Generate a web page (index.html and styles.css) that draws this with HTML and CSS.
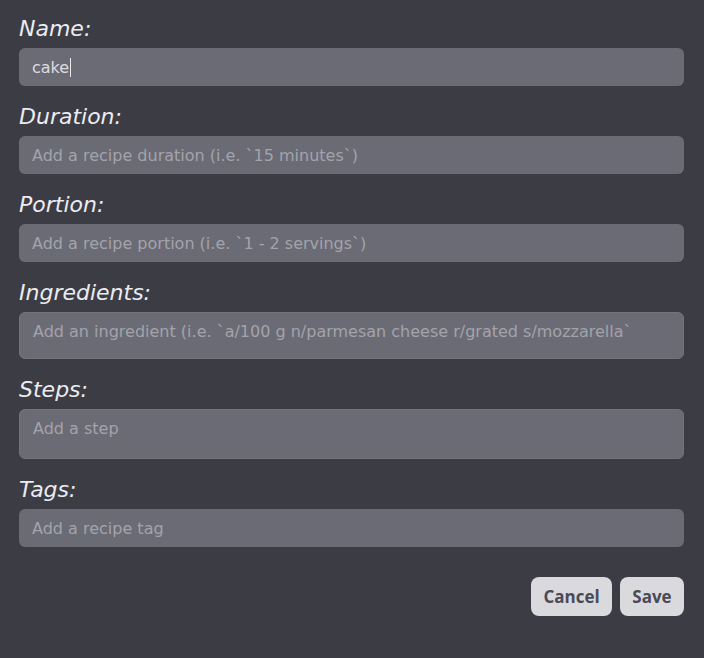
FILE: index.html
```html
<!DOCTYPE html>
<html>
<head>
<meta charset="utf-8">
<link rel="stylesheet" href="styles.css">
</head>
<body>
<form class="form">
  <div class="field">
    <label class="label">Name:</label>
    <div class="input filled">cake<span class="caret"></span></div>
  </div>
  <div class="field">
    <label class="label">Duration:</label>
    <input class="input" placeholder="Add a recipe duration (i.e. `15 minutes`)">
  </div>
  <div class="field">
    <label class="label">Portion:</label>
    <input class="input" placeholder="Add a recipe portion (i.e. `1 - 2 servings`)">
  </div>
  <div class="field">
    <label class="label">Ingredients:</label>
    <textarea class="input area ingredients" placeholder="Add an ingredient (i.e. `a/100 g n/parmesan cheese r/grated s/mozzarella`"></textarea>
  </div>
  <div class="field">
    <label class="label">Steps:</label>
    <textarea class="input area steps" placeholder="Add a step"></textarea>
  </div>
  <div class="field">
    <label class="label">Tags:</label>
    <input class="input" placeholder="Add a recipe tag">
  </div>
  <div class="actions">
    <button type="button" class="btn cancel">Cancel</button>
    <button type="button" class="btn save">Save</button>
  </div>
</form>
</body>
</html>
```
FILE: styles.css
```css
html, body {
  margin: 0;
  background: #3c3c45;
}
body {
  padding: 14px 20px 0 19px;
  font-family: "DejaVu Sans", "Open Sans", sans-serif;
}
.form {
  display: flex;
  flex-direction: column;
}
.field {
  display: flex;
  flex-direction: column;
  margin-bottom: 16px;
}
.label {
  font-size: 22px;
  line-height: 28px;
  padding-top: 1px;
  padding-bottom: 5px;
  font-style: italic;
  color: #ececf0;
}
.input {
  box-sizing: border-box;
  width: 100%;
  height: 38px;
  margin: 0;
  padding: 0 13px;
  border: none;
  outline: none;
  border-radius: 6px;
  background: #6b6b75;
  font-family: inherit;
  font-size: 16px;
  color: #dcdce0;
}
.input::placeholder {
  color: #a3a3ab;
  opacity: 1;
}
.filled {
  display: flex;
  align-items: center;
}
.caret {
  display: inline-block;
  width: 1px;
  height: 19px;
  background: #e8e8ec;
  margin-left: 1px;
}
.area {
  resize: none;
  padding: 8px 13px;
  line-height: 22px;
  border: 1px solid #73737d;
}
.ingredients { height: 47px; }
.steps { height: 50px; }
.actions {
  display: flex;
  justify-content: flex-end;
  gap: 8px;
  margin-top: 14px;
}
.btn {
  height: 39px;
  padding: 0;
  border: none;
  border-radius: 8px;
  background: #dadade;
  color: #4a4a56;
  font-family: "Open Sans", sans-serif;
  font-weight: 700;
  font-size: 17px;
}
.cancel { width: 81px; }
.save { width: 64px; }
```
